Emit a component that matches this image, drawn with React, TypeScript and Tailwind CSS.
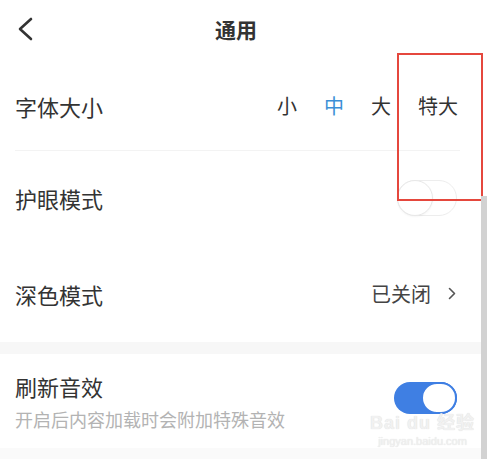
const font = { fontFamily: '"Noto Sans CJK SC", "Noto Sans", sans-serif' };

function Toggle({ on }: { on: boolean }) {
  if (on) {
    return (
      <div className="relative h-[32px] w-[63px] rounded-full bg-[#3f7fe3]">
        <div className="absolute right-0 top-0 h-[32px] w-[36px] rounded-full border-2 border-[#3f7fe3] bg-white" />
      </div>
    );
  }
  return (
    <div className="relative h-[36px] w-[60px] rounded-full border border-[#ededed] bg-white">
      <div className="absolute left-[-1px] top-[-1px] h-[36px] w-[36px] rounded-full border border-[#e8e8e8] bg-white shadow-[0_1px_2px_rgba(0,0,0,0.04)]" />
    </div>
  );
}

export default function App() {
  const sizes = ["小", "中", "大", "特大"];

  return (
    <div className="relative h-[459px] w-[487px] overflow-hidden bg-white text-[#333]" style={font}>
      {/* Header */}
      <div className="flex h-[58px] items-center">
        <div className="flex w-[50px] items-center pl-[17px]">
          <svg width="16" height="24" viewBox="0 0 16 24" fill="none">
            <polyline points="14,2 3,12 14,22" stroke="#333" strokeWidth="2.6" strokeLinecap="round" strokeLinejoin="round" />
          </svg>
        </div>
        <div className="flex flex-1 justify-center text-[21px] font-bold leading-none">通用</div>
        <div className="w-[65px]" />
      </div>

      {/* Font size */}
      <div className="flex h-[92px] items-center pl-[15px] pr-[29px] pt-[3px]">
        <div className="flex-1 text-[22px] leading-none">字体大小</div>
        <div className="flex items-center gap-[27px] text-[20px] leading-none">
          {sizes.map((s) => (
            <span key={s} className={s === "中" ? "text-[#3b8fd6]" : "text-[#333]"}>
              {s}
            </span>
          ))}
        </div>
      </div>
      <div className="ml-[15px] mr-[27px] h-px bg-[#f3f3f3]" />

      {/* Eye care */}
      <div className="flex h-[94px] items-center pl-[15px] pr-[30px]">
        <div className="flex-1 text-[22px] leading-none">护眼模式</div>
        <Toggle on={false} />
      </div>

      {/* Dark mode */}
      <div className="flex h-[97px] items-center pl-[15px] pr-[31px]">
        <div className="flex-1 text-[22px] leading-none">深色模式</div>
        <div className="flex items-center gap-[17px]">
          <span className="text-[20px] leading-none text-[#444]">已关闭</span>
          <svg width="8" height="13" viewBox="0 0 8 13" fill="none">
            <polyline points="1.5,1.5 6.5,6.5 1.5,11.5" stroke="#555" strokeWidth="1.6" strokeLinecap="round" strokeLinejoin="round" />
          </svg>
        </div>
      </div>

      <div className="h-[12px] bg-[#f7f7f7]" />

      {/* Refresh sound */}
      <div className="flex h-[94px] items-center pl-[15px] pr-[30px]">
        <div className="flex flex-1 flex-col gap-[13px]">
          <div className="text-[22px] leading-none">刷新音效</div>
          <div className="text-[18px] leading-none text-[#b3b3b3]">开启后内容加载时会附加特殊音效</div>
        </div>
        <div className="mt-[-6px]">
          <Toggle on={true} />
        </div>
      </div>
      <div className="h-[11px] bg-[#fafafa]" />

      {/* Red highlight box */}
      <div className="absolute left-[397px] top-[53px] h-[148px] w-[86px] border-2 border-[#e5473d]" />

      {/* Scroll indicator */}
      <div className="absolute right-0 top-[196px] h-[263px] w-[6px] bg-[#d2d2d2]" />

      {/* Watermark */}
      <div
        className="absolute left-[370px] top-[414px] flex flex-col items-center leading-none text-[#f1f1f1]"
        style={{ fontFamily: '"Liberation Sans", "Noto Sans CJK SC", sans-serif', textShadow: "0 0 1px #d6d6d6" }}
      >
        <span className="text-[18px] font-bold tracking-[1px]">Bai du 经验</span>
        <span className="mt-[4px] text-[11px]">jingyan.baidu.com</span>
      </div>
    </div>
  );
}
